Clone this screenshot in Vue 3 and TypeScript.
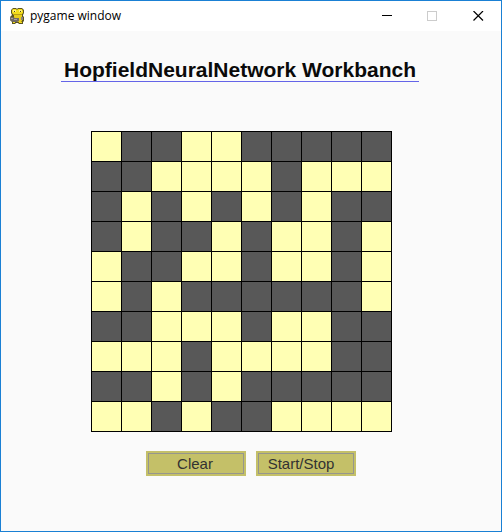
<script setup lang="ts">
import { ref } from 'vue'

const SIZE = 10

const initial: string[] = [
  '.##..#####',
  '##....#...',
  '#.#.#.#.##',
  '#.##.#..#.',
  '.##..#..#.',
  '.#.######.',
  '##...#..##',
  '...#....##',
  '##.#.#####',
  '..#.##....',
]

const cells = ref<boolean[]>(initial.join('').split('').map((c) => c === '#'))
const running = ref(false)

function toggle(index: number): void {
  cells.value[index] = !cells.value[index]
}

function clear(): void {
  cells.value = cells.value.map(() => false)
}

function cellLabel(index: number): string {
  return `Row ${Math.floor(index / SIZE) + 1}, column ${(index % SIZE) + 1}`
}
</script>

<template>
  <div class="window">
    <header class="titlebar">
      <svg class="logo" viewBox="0 0 16 18" aria-hidden="true">
        <path d="M4 1h3l1 1 1-1h4l2 2v3l-1 2v1l1 1v4l-1 1v2h-4l-1-1H7l-1 1H3v-2l-2-2v-3l2-2V8L2 6V3z" fill="#5c5420" />
        <path d="M4 2h3l1 1 1-1h4l1 2v2l-2 2H5L3 6V3z" fill="#f2dc1c" />
        <path d="M4 3h3v2H4zM10 3h3v2h-3z" fill="#fff27a" />
        <path d="M5 4h1v1H5zM11 4h1v1h-1z" fill="#4a431c" />
        <path d="M4 7h9v1H4z" fill="#b89e14" />
        <path d="M5 8h8v6l-1 1H6l-1-1z" fill="#e8cc1a" />
        <path d="M1 10h3l2 1h4v3l-2 1H4l-3-2z" fill="#716a66" />
        <path d="M2 11h2v1H2zM5 12h3v1H5z" fill="#a9a29f" />
        <path d="M12 10h2v3h-2z" fill="#8c8480" />
        <path d="M4 15h2v1H4zM10 15h3v1h-3z" fill="#f2dc1c" />
      </svg>
      <span class="caption">pygame window</span>
      <div class="controls">
        <button class="control" type="button" aria-label="Minimize">
          <svg viewBox="0 0 11 11" shape-rendering="crispEdges"><path d="M1 4.5h10" stroke="#000" /></svg>
        </button>
        <button class="control" type="button" aria-label="Maximize" disabled>
          <svg viewBox="0 0 11 11" shape-rendering="crispEdges"><path d="M.5.5h9v9h-9z" fill="none" stroke="#ccc" /></svg>
        </button>
        <button class="control" type="button" aria-label="Close">
          <svg viewBox="0 0 11 11"><path d="M.5 0l9.5 9.500M10 0L.5 9.500" stroke="#000" stroke-width="1.200" /></svg>
        </button>
      </div>
    </header>

    <main class="surface">
      <h1 class="heading">HopfieldNeuralNetwork Workbanch</h1>

      <div class="board">
        <button
          v-for="(on, i) in cells"
          :key="i"
          type="button"
          class="cell"
          :class="{ on }"
          :aria-pressed="on"
          :aria-label="cellLabel(i)"
          @click="toggle(i)"
        ></button>
      </div>

      <div class="actions">
        <button class="action" type="button" @click="clear"><span class="face">Clear</span></button>
        <button class="action" type="button" @click="running = !running">
          <span class="face start">Start/Stop</span>
        </button>
      </div>
    </main>
  </div>
</template>

<style>
body {
  margin: 0;
}
</style>

<style scoped>
.window {
  box-sizing: border-box;
  min-height: 100vh;
  display: flex;
  flex-direction: column;
  border: 1px solid #1a80d4;
  background: #fafafa;
}

.titlebar {
  display: flex;
  align-items: center;
  height: 30px;
  padding-left: 8px;
  background: #fff;
}

.logo {
  width: 16px;
  height: 18px;
}

.caption {
  margin-left: 5px;
  font: 12px/16px "Open Sans", "Noto Sans", sans-serif;
  color: #000;
}

.controls {
  display: flex;
  align-self: stretch;
  margin-left: auto;
}

.control {
  display: flex;
  align-items: center;
  justify-content: center;
  width: 46px;
  padding: 0;
  border: 0;
  background: none;
}

.control svg {
  width: 11px;
  height: 11px;
}

.surface {
  flex: 1;
  display: flex;
  flex-direction: column;
  align-items: flex-start;
  padding: 28px 60px;
}

.heading {
  margin: 0;
  padding: 0 3px;
  border-bottom: 1px solid #6464e8;
  font: bold 21px/22px "Liberation Sans", Arial, sans-serif;
  color: #0a0a0a;
  white-space: nowrap;
}

.board {
  display: grid;
  grid-template-columns: repeat(10, 29px);
  grid-auto-rows: 29px;
  gap: 1px;
  margin: 49px 30px 0;
  padding: 1px;
  background: #000;
}

.cell {
  padding: 0;
  border: 0;
  background: #ffffb4;
}

.cell.on {
  background: #585858;
}

.actions {
  display: flex;
  align-self: center;
  gap: 10px;
  margin-top: 19px;
}

.action {
  width: 100px;
  height: 25px;
  padding: 2px;
  border: 0;
  background: #c4c068;
  font: 15px/19px "Liberation Sans", Arial, sans-serif;
  color: #323232;
}

.face {
  display: block;
  padding-right: 2px;
  border: 1px solid #96968c;
  text-align: center;
}

.start {
  padding-right: 10px;
}
</style>
